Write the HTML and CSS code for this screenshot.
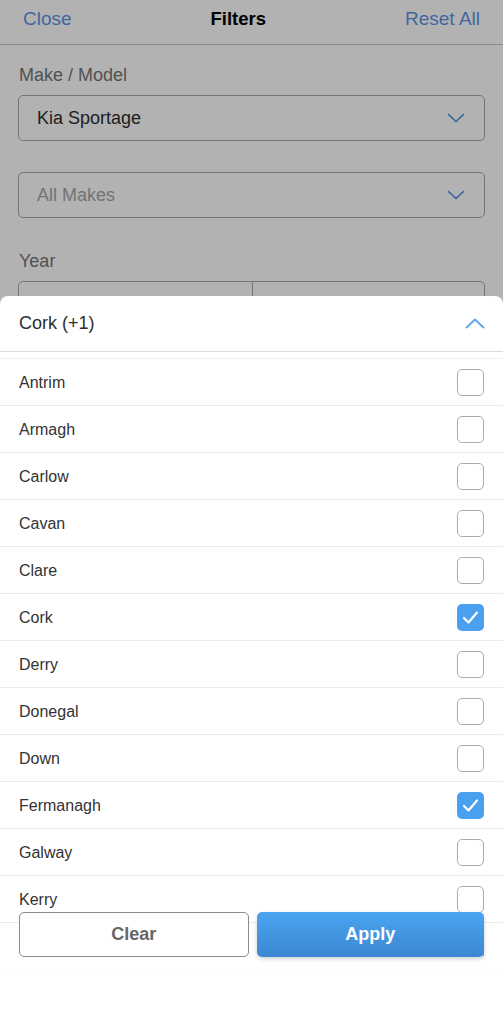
FILE: index.html
```html
<!DOCTYPE html>
<html lang="en">
<head>
<meta charset="utf-8">
<title>Filters</title>
<link rel="stylesheet" href="styles.css">
</head>
<body>
<div class="screen">
  <div class="page">
    <header class="topbar">
      <span class="link">Close</span>
      <span class="title">Filters</span>
      <span class="link">Reset All</span>
    </header>
    <div class="content">
      <div class="label">Make / Model</div>
      <div class="select">
        <span class="value">Kia Sportage</span>
        <svg class="chev" width="18" height="10" viewBox="0 0 18 10"><path d="M1.5 1.5 L9 8.5 L16.5 1.5" fill="none" stroke="#4f90e0" stroke-width="1.7" stroke-linecap="round" stroke-linejoin="round"/></svg>
      </div>
      <div class="select second">
        <span class="value placeholder">All Makes</span>
        <svg class="chev" width="18" height="10" viewBox="0 0 18 10"><path d="M1.5 1.5 L9 8.5 L16.5 1.5" fill="none" stroke="#4f90e0" stroke-width="1.7" stroke-linecap="round" stroke-linejoin="round"/></svg>
      </div>
      <div class="label year">Year</div>
      <div class="range">
        <div class="range-cell"></div>
        <div class="range-cell"></div>
      </div>
    </div>
  </div>
  <div class="dim"></div>

  <section class="sheet">
    <div class="sheet-head">
      <span class="sheet-title">Cork (+1)</span>
      <svg width="20" height="11" viewBox="0 0 20 11"><path d="M1.5 9.5 L10 1.5 L18.5 9.5" fill="none" stroke="#5aa5ec" stroke-width="1.8" stroke-linecap="round" stroke-linejoin="round"/></svg>
    </div>
    <ul class="list">
      <li class="row"><span>Antrim</span><span class="box"></span></li>
      <li class="row"><span>Armagh</span><span class="box"></span></li>
      <li class="row"><span>Carlow</span><span class="box"></span></li>
      <li class="row"><span>Cavan</span><span class="box"></span></li>
      <li class="row"><span>Clare</span><span class="box"></span></li>
      <li class="row"><span>Cork</span><span class="box on"><svg width="27" height="27" viewBox="0 0 27 27"><path d="M7 14 L11.5 18.5 L20 8.5" fill="none" stroke="#fff" stroke-width="2.2" stroke-linecap="round" stroke-linejoin="round"/></svg></span></li>
      <li class="row"><span>Derry</span><span class="box"></span></li>
      <li class="row"><span>Donegal</span><span class="box"></span></li>
      <li class="row"><span>Down</span><span class="box"></span></li>
      <li class="row"><span>Fermanagh</span><span class="box on"><svg width="27" height="27" viewBox="0 0 27 27"><path d="M7 14 L11.5 18.5 L20 8.5" fill="none" stroke="#fff" stroke-width="2.2" stroke-linecap="round" stroke-linejoin="round"/></svg></span></li>
      <li class="row"><span>Galway</span><span class="box"></span></li>
      <li class="row"><span>Kerry</span><span class="box"></span></li>
      <li class="row"><span>Kildare</span><span class="box"></span></li>
    </ul>
    <div class="footer">
      <div class="actions">
        <button class="btn clear">Clear</button>
        <button class="btn apply">Apply</button>
      </div>
    </div>
  </section>
</div>
</body>
</html>
```

FILE: styles.css
```css
* { box-sizing: border-box; }
html, body { margin: 0; padding: 0; background: #fff; }
body { font-family: "Liberation Sans", Arial, sans-serif; }

.screen {
  position: relative;
  width: 503px;
  height: 1024px;
  overflow: hidden;
  background: #fff;
}

.topbar {
  height: 45px;
  display: flex;
  align-items: center;
  justify-content: space-between;
  padding: 0 23px 6px 23px;
  border-bottom: 1px solid #c4c4c4;
  font-size: 19px;
}
.link { color: #5e94e6; }
.title { font-weight: bold; color: #000; font-size: 18.5px; }

.content { padding: 19px 18px 0 18px; }
.label {
  font-size: 18px;
  color: #767676;
  padding-left: 1px;
  line-height: 22px;
}
.select {
  margin-top: 9px;
  height: 46px;
  border: 1px solid #a8a8a8;
  border-radius: 5px;
  display: flex;
  align-items: center;
  justify-content: space-between;
  padding: 0 19px 0 18px;
}
.select.second { margin-top: 31px; }
.value { font-size: 18px; color: #2e2e2e; }
.value.placeholder { color: #a6a6a6; }
.label.year { margin-top: 32px; }
.range {
  margin-top: 9px;
  height: 46px;
  border: 1px solid #a8a8a8;
  border-radius: 5px;
  display: grid;
  grid-template-columns: 1fr 1fr;
}
.range-cell + .range-cell { border-left: 1px solid #a8a8a8; }

.dim {
  position: absolute;
  inset: 0;
  background: rgba(0, 0, 0, 0.3);
}

.sheet {
  position: absolute;
  top: 296px;
  left: 0;
  right: 0;
  bottom: 0;
  background: #fff;
  border-radius: 8px 8px 0 0;
  overflow: hidden;
}
.sheet-head {
  height: 56px;
  display: flex;
  align-items: center;
  justify-content: space-between;
  padding: 0 18px 0 19px;
  border-bottom: 1px solid #dcdcdc;
}
.sheet-title { font-size: 18px; color: #2e2e2e; }

.list {
  list-style: none;
  margin: 6px 0 0 0;
  padding: 0;
  border-top: 1px solid #efefef;
}
.row {
  height: 47px;
  border-bottom: 1px solid #ececec;
  display: flex;
  align-items: center;
  justify-content: space-between;
  padding: 1px 19px 0 19px;
  font-size: 16px;
  color: #333;
}
.box {
  width: 27px;
  height: 27px;
  margin-top: -1px;
  border: 1.5px solid #acacac;
  border-radius: 5px;
  background: #fff;
  display: block;
}
.box.on {
  border: none;
  background: #4aa0ef;
}
.box svg { display: block; }

.footer {
  position: absolute;
  left: 0;
  right: 0;
  bottom: 0;
  height: 112px;
  background: linear-gradient(to bottom, rgba(255,255,255,0) 0, rgba(255,255,255,0) 45px, rgba(255,255,255,0.95) 45px);
}
.actions {
  display: flex;
  gap: 8px;
  padding: 0 19px;
}
.btn {
  flex: 1;
  height: 45px;
  border-radius: 5px;
  font-family: "Liberation Sans", Arial, sans-serif;
  font-size: 18px;
  font-weight: bold;
}
.btn.clear {
  background: #fff;
  border: 1.5px solid #8c8c8c;
  color: #666;
}
.btn.apply {
  border: none;
  color: #fff;
  background: linear-gradient(to bottom, #4ba4f1, #3b87d1);
  box-shadow: 0 2px 4px rgba(0, 0, 0, 0.18);
}
```
